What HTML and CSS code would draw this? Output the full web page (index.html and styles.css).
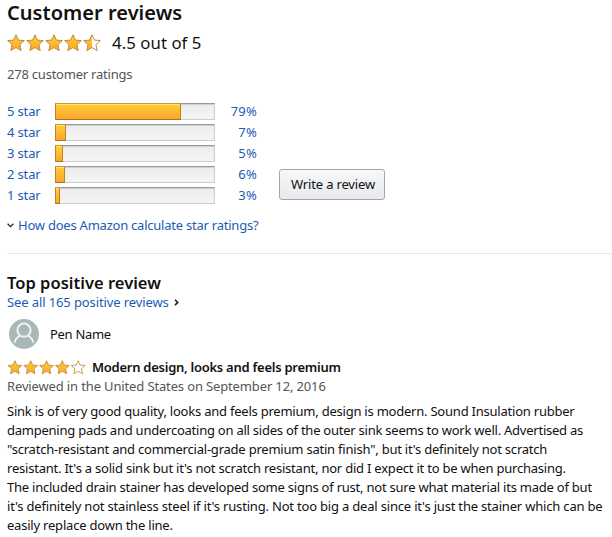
FILE: index.html
```
<!DOCTYPE html>
<html lang="en">
<head>
<meta charset="utf-8">
<title>Customer reviews</title>
<link rel="stylesheet" href="styles.css">
</head>
<body>
<svg class="defs" width="0" height="0" aria-hidden="true">
  <defs>
    <linearGradient id="gold" x1="0" y1="0" x2="0" y2="1"><stop offset="0" stop-color="#ffce3a"/><stop offset="1" stop-color="#fba828"/></linearGradient>
    <path id="star" d="M9 .8 11.4 6.1 17.3 6.6 12.9 10.6 14.2 16.6 9 13.5 3.8 16.6 5.1 10.6 .7 6.6 6.6 6.1Z"/>
    <path id="half" d="M9 .8V13.5L3.8 16.6 5.1 10.6 .7 6.6 6.6 6.1Z"/>
  </defs>
</svg>
<main class="reviews">
  <h1 class="title"><span>Customer reviews</span></h1>
  <div class="summary">
    <svg class="stars" width="94" height="18" viewBox="0 0 94 18">
      <use href="#star" class="full"/><use href="#star" class="full" x="19"/><use href="#star" class="full" x="38"/><use href="#star" class="full" x="57"/>
      <use href="#half" class="fill" x="76"/><use href="#star" class="empty" x="76"/>
    </svg>
    <span class="score">4.5 out of 5</span>
  </div>
  <p class="count"><span>278 customer ratings</span></p>
  <div class="breakdown">
    <div class="histogram">
      <div class="row"><a>5 star</a><div class="meter"><div class="bar" style="width:126px"></div></div><a class="pct">79%</a></div>
      <div class="row"><a>4 star</a><div class="meter"><div class="bar" style="width:11px"></div></div><a class="pct">7%</a></div>
      <div class="row"><a>3 star</a><div class="meter"><div class="bar" style="width:8px"></div></div><a class="pct">5%</a></div>
      <div class="row"><a>2 star</a><div class="meter"><div class="bar" style="width:10px"></div></div><a class="pct">6%</a></div>
      <div class="row"><a>1 star</a><div class="meter"><div class="bar" style="width:5px"></div></div><a class="pct">3%</a></div>
    </div>
    <button class="write"><span>Write a review</span></button>
  </div>
  <div class="how"><svg width="7" height="5" viewBox="0 0 7 5"><path class="chevron" d="M.6.8 3.5 3.6 6.4.8"/></svg><a>How does Amazon calculate star ratings?</a></div>
  <section class="top-review">
    <h2 class="heading"><span>Top positive review</span></h2>
    <div class="all"><a>See all 165 positive reviews</a><svg width="5" height="7" viewBox="0 0 5 7"><path class="chevron bold" d="M1 .7 3.7 3.4 1 6.1"/></svg></div>
    <div class="author">
      <svg width="30" height="30" viewBox="0 0 30 30"><circle cx="15" cy="15" r="15" fill="#a9b7b7"/><circle cx="15" cy="11.2" r="6.6" class="person"/><path class="person" d="M5.6 23.6C6.6 19.6 8.8 17.4 11.6 16.6M24.4 23.6C23.4 19.6 21.2 17.4 18.4 16.6"/></svg>
      <span class="name">Pen Name</span>
    </div>
    <div class="verdict">
      <svg class="stars" width="79" height="15" viewBox="0 0 94 18">
        <use href="#star" class="full"/><use href="#star" class="full" x="19"/><use href="#star" class="full" x="38"/><use href="#star" class="full" x="57"/><use href="#star" class="empty" x="76"/>
      </svg>
      <strong>Modern design, looks and feels premium</strong>
    </div>
    <p class="date"><span>Reviewed in the United States on September 12, 2016</span></p>
    <p class="body">
      <span class="l1">Sink is of very good quality, looks and feels premium, design is modern. Sound Insulation rubber</span><br>
      <span class="l2">dampening pads and undercoating on all sides of the outer sink seems to work well. Advertised as</span><br>
      <span class="l3">"scratch-resistant and commercial-grade premium satin finish", but it's definitely not scratch</span><br>
      <span class="l4">resistant. It's a solid sink but it's not scratch resistant, nor did I expect it to be when purchasing.</span><br>
      <span class="l5">The included drain stainer has developed some signs of rust, not sure what material its made of but</span><br>
      <span class="l6">it's definitely not stainless steel if it's rusting. Not too big a deal since it's just the stainer which can be</span><br>
      <span class="l7">easily replace down the line.</span>
    </p>
  </section>
</main>
</body>
</html>
```
FILE: styles.css
```
* { box-sizing: border-box; }
body { margin: 0; background: #fff; color: #111; font: 13px/19px "Noto Sans", sans-serif; overflow: hidden; }
h1, h2, p { margin: 0; }
a { color: #1c5bb5; white-space: nowrap; }
svg { flex: none; display: block; }
.defs { position: absolute; }
.reviews { padding-left: 7px; height: 537px; white-space: nowrap; }
.title { font-size: 20px; line-height: 26px; font-weight: 600; letter-spacing: .04px; }
.summary { display: flex; align-items: center; height: 34px; gap: 11px; }
.score { font-size: 16.8px; line-height: 24px; letter-spacing: .05px; }
.full { fill: url(#gold); stroke: #c08a38; stroke-width: 1; }
.fill { fill: url(#gold); }
.empty { fill: none; stroke: #c08a38; stroke-width: 1; }
.count { color: #555; padding-top: 5px; height: 41px; letter-spacing: -.22px; }
.breakdown { display: flex; height: 107px; }
.histogram { width: 250px; }
.row { display: grid; grid-template-columns: 48px 160px 42px; height: 21px; align-items: center; letter-spacing: -.15px; }
.meter { height: 17px; background: linear-gradient(#ededed, #f4f4f4); border: 1px solid #ccc; border-top-color: #999; box-shadow: inset 0 1px 1px #ccc; }
.bar { height: 17px; margin: -1px 0 0 -1px; background: linear-gradient(#ffce3a, #fca52b); border: 1px solid #b98725; border-top-color: #c79b2c; border-bottom-color: #ad7420; box-shadow: inset 0 1px 0 #ffe06a; }
.pct { text-align: right; letter-spacing: .2px; }
.write { margin: 68px 0 0 22px; width: 106px; height: 31px; padding: 0 0 0 2px; border: 1px solid #a2a6ac; border-radius: 3px; background: linear-gradient(#f7f8fa, #e7e9ec); color: #111; font: inherit; letter-spacing: -.16px; }
.how { display: flex; align-items: center; gap: 4px; height: 34px; letter-spacing: -.23px; }
.chevron { fill: none; stroke: #222; stroke-width: 1.3; }
.chevron.bold { stroke-width: 1.6; }
.person { fill: none; stroke: #eef2f2; stroke-width: 2; }
.top-review { border-top: 1px solid #e7e7e7; margin-top: 11px; padding-top: 18px; }
.heading { font-size: 16.5px; line-height: 21px; font-weight: 600; letter-spacing: .02px; }
.all { display: flex; align-items: center; gap: 5px; height: 19px; letter-spacing: -.11px; }
.author { display: flex; align-items: center; gap: 11px; height: 30px; margin: 7px 0 0 2px; }
.name { letter-spacing: -.3px; }
.verdict { display: flex; align-items: center; gap: 6px; height: 19px; margin-top: 9px; }
.verdict strong { font-weight: 600; letter-spacing: -.26px; }
.date { color: #555; height: 19px; letter-spacing: -.14px; }
.body { margin-top: 6px; }
.l1 { letter-spacing: -.226px; }
.l2 { letter-spacing: -.24px; }
.l3, .l4 { letter-spacing: -.218px; }
.l5 { letter-spacing: -.23px; }
.l6 { letter-spacing: -.19px; }
.l7 { letter-spacing: -.21px; }
```
